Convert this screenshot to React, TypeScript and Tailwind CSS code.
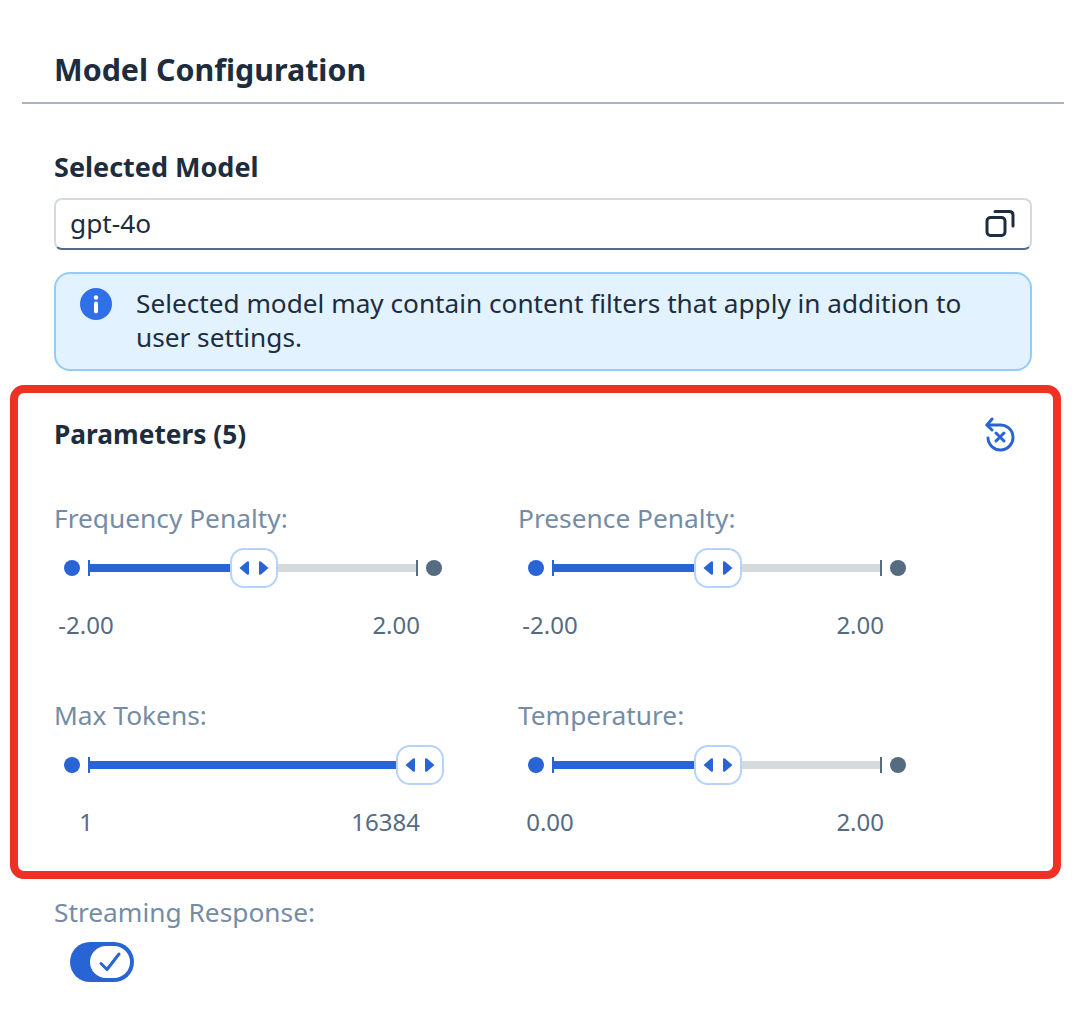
const Slider = ({
  label,
  min,
  max,
  percent,
  full,
}: {
  label: string;
  min: string;
  max: string;
  percent: number;
  full?: boolean;
}) => (
  <div className="flex flex-col">
    <div className="h-[34px] text-[26.3px] leading-[34px] text-[#758ca4]">{label}</div>
    <div className="mt-[13px] ml-[10px] flex h-10 w-[380px] items-center">
      <div className="h-4 w-4 rounded-full bg-[#2964d5]" />
      <div className="relative ml-2 flex h-[8px] w-[330px] items-center bg-[#d5dadd]">
        <div className="absolute left-0 top-0 h-full bg-[#2964d5]" style={{ width: `${percent}%` }} />
        <div className="absolute left-0 top-[-4px] h-4 w-[2px] bg-[#2964d5]" />
        <div className="absolute right-0 top-[-4px] h-4 w-[2px] bg-[#556b82]" />
        <div
          className={`absolute top-[-16px] flex h-10 w-[48px] items-center justify-center gap-[10px] rounded-[14px] border-2 border-[#b5d3fd] bg-white ${
            full ? "right-[-26px]" : "left-[142px]"
          }`}
        >
          <svg width="10" height="14" viewBox="0 0 10 14">
            <path d="M0.5 7 L8 0.6 Q10 -0.4 10 1.5 V12.5 Q10 14.4 8 13.4 Z" fill="#2964d5" />
          </svg>
          <svg width="10" height="14" viewBox="0 0 10 14">
            <path d="M9.5 7 L2 0.6 Q0 -0.4 0 1.5 V12.5 Q0 14.4 2 13.4 Z" fill="#2964d5" />
          </svg>
        </div>
      </div>
      {!full && <div className="ml-2 h-4 w-4 rounded-full bg-[#556b82]" />}
      {full && <div className="ml-2 h-4 w-4" />}
    </div>
    <div className="mt-5 flex h-[34px] w-[366px] items-center justify-between text-[24px] leading-[34px] text-[#556b82]">
      <span className="w-[64px] text-center">{min}</span>
      <span>{max}</span>
    </div>
  </div>
);

export default function App() {
  return (
    <div
      className="h-[1016px] w-[1084px] overflow-hidden bg-white px-[22px] text-[#1d2d3e]"
      style={{ fontFamily: '"Noto Sans", sans-serif' }}
    >
      <div className="w-[1042px]">
        <div className="flex h-[104px] items-start border-b-2 border-[#a9b4be] pl-8 pt-[46px]">
          <h1 className="text-[30.4px] font-bold leading-[48px]">Model Configuration</h1>
        </div>

        <div className="mt-[46px] pl-8 pr-8">
          <div className="text-[27px] font-bold leading-[34px]">Selected Model</div>
          <div className="mt-[14px] flex h-[52px] items-center justify-between rounded-lg border-2 border-[#d5dadd] border-b-[#556b82] pl-[14px] pr-[14px]">
            <span className="pb-[3px] text-[26.3px] leading-[34px]">gpt-4o</span>
            <svg width="32" height="32" viewBox="0 0 32 32" fill="none" stroke="#1d2d3e" strokeWidth="3" strokeLinecap="round">
              <rect x="3" y="9.5" width="18" height="18" rx="3.5" />
              <path d="M11 3.5 H25 Q29 3.5 29 7 V18" />
            </svg>
          </div>
          <div className="mt-[22px] flex h-[99px] rounded-2xl border-2 border-[#91cdfb] bg-[#e3f2ff] pl-[24px] pr-4 pt-[14px]">
            <svg className="shrink-0" width="32" height="32" viewBox="0 0 32 32">
              <circle cx="16" cy="16" r="16" fill="#2f6fe8" />
              <circle cx="16" cy="9.5" r="2.2" fill="white" />
              <rect x="14" y="13.5" width="4" height="12" rx="2" fill="white" />
            </svg>
            <p className="ml-[24px] mt-[-2px] text-[26.2px] leading-[34px]">
              Selected model may contain content filters that apply in addition to user settings.
            </p>
          </div>
        </div>

        <div className="ml-[-12px] mt-[14px] h-[494px] w-[1051px] rounded-[14px] border-8 border-[#ee3124] pl-[36px] pr-[36px] pt-[24px]">
          <div className="flex h-[34px] items-center justify-between">
            <span className="text-[26.3px] font-bold leading-[34px]">Parameters (5)</span>
            <svg className="mr-[-1px] mt-[2px]" width="34" height="36" viewBox="0 0 34 36" fill="none" stroke="#2964d5" strokeWidth="3" strokeLinecap="round" strokeLinejoin="round">
              <path d="M8 2 L3 8 L8 13" />
              <path d="M3 8 H15 A12.5 12.5 0 1 1 4 21" />
              <path d="M12 16 L20 24 M20 16 L12 24" />
            </svg>
          </div>
          <div className="mt-[50px] grid grid-cols-[464px_464px] gap-y-[56px]">
            <Slider label="Frequency Penalty:" min="-2.00" max="2.00" percent={45} />
            <Slider label="Presence Penalty:" min="-2.00" max="2.00" percent={45} />
            <Slider label="Max Tokens:" min="1" max="16384" percent={100} full />
            <Slider label="Temperature:" min="0.00" max="2.00" percent={45} />
          </div>
        </div>

        <div className="mt-[16px] pl-8">
          <div className="text-[26.3px] leading-[34px] text-[#758ca4]">Streaming Response:</div>
          <div className="ml-4 mt-[13px] flex h-10 w-16 items-center justify-end rounded-full bg-[#2964d5] pr-1">
            <div className="flex h-8 w-10 items-center justify-center rounded-full bg-white">
              <svg width="24" height="22" viewBox="0 0 24 22" fill="none" stroke="#2964d5" strokeWidth="3" strokeLinecap="round" strokeLinejoin="round">
                <path d="M3 12.5 L9 18.5 L21 3" />
              </svg>
            </div>
          </div>
        </div>
      </div>
    </div>
  );
}
